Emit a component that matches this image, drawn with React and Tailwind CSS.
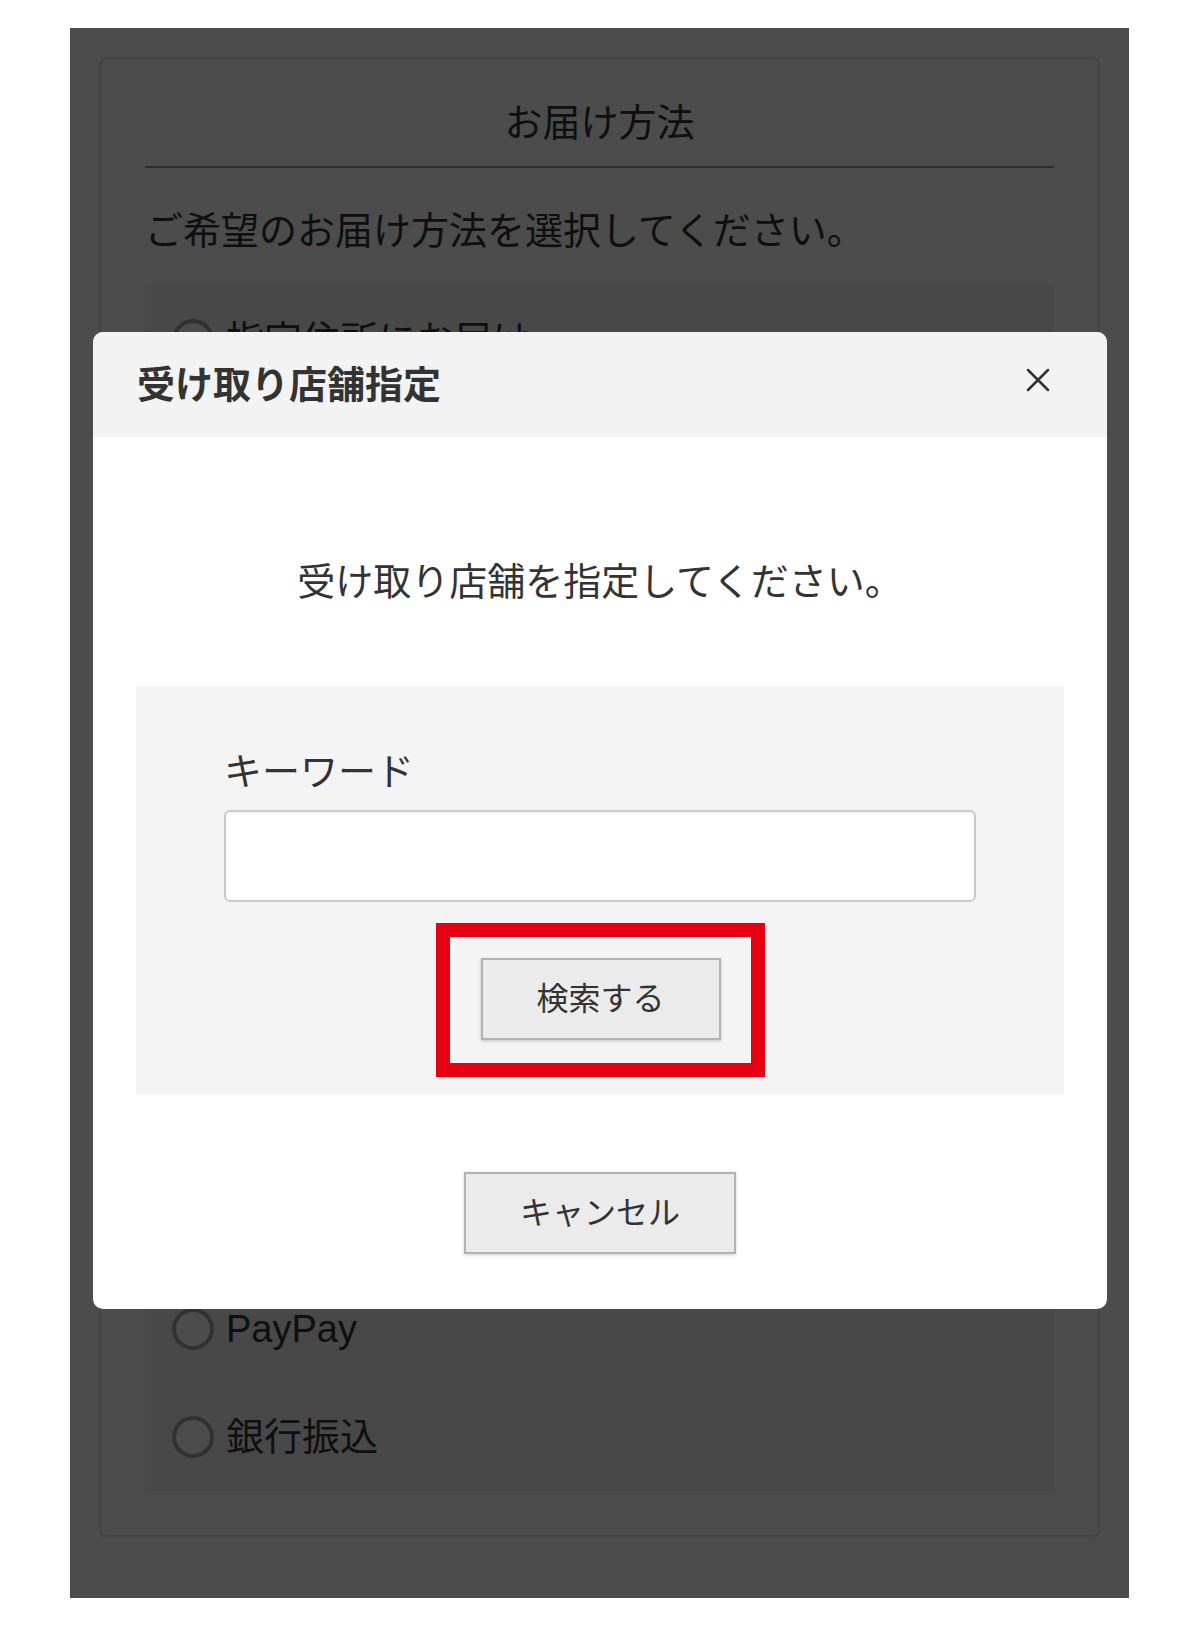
import { X } from 'lucide-react'

const font = { fontFamily: '"Liberation Sans", "Noto Sans CJK JP", sans-serif' }

const RadioRow = ({ label }) => (
  <div className="h-[108px] flex items-center gap-[12px] pl-[27px]">
    <span className="w-[42px] h-[42px] rounded-full border-[4px] border-[#a6a6a6] bg-white shrink-0" />
    <span className="text-[38px] leading-[50px] text-[#333]">{label}</span>
  </div>
)

const App = () => {
  return (
    <div className="bg-white h-[1626px] pt-[28px]" style={font}>
      <div className="relative ml-[70px] w-[1059px] h-[1570px] bg-white overflow-hidden">
        {/* page behind the dialog */}
        <div className="pt-[30px] px-[30px]">
          <div className="w-[999px] rounded-[5px] border border-[#d6d6d6] shadow-sm bg-white px-[44px] pt-[39px] pb-[44px]">
            <h2 className="text-center text-[38px] leading-[50px] text-[#333]">お届け方法</h2>
            <div className="mt-[18px] h-[2px] bg-[#9a9a9a]" />
            <p className="mt-[38px] text-[38px] leading-[50px] text-[#333]">ご希望のお届け方法を選択してください。</p>
            <div className="mt-[30px] bg-[#f2f2f2]">
              <RadioRow label="指定住所にお届け" />
              {/* rows hidden by the dialog */}
              <div className="h-[881px]" />
              <RadioRow label="PayPay" />
              <RadioRow label="銀行振込" />
            </div>
          </div>
        </div>

        {/* overlay */}
        <div className="absolute inset-0 bg-black/70" />

        {/* dialog */}
        <div className="absolute left-[23px] top-[304px] w-[1014px] h-[977px] rounded-[10px] bg-white overflow-hidden">
          <div className="h-[105px] bg-[#f4f3f3] flex items-center justify-between pl-[44px] pr-[49px]">
            <h3 className="text-[38px] leading-[50px] font-bold text-[#333]">受け取り店舗指定</h3>
            <button className="-mt-[10px] text-[#333]">
              <X className="w-[40px] h-[40px]" strokeWidth={1.5} />
            </button>
          </div>

          <div className="flex flex-col items-center pt-[120px]">
            <p className="text-[38px] leading-[50px] text-[#333]">受け取り店舗を指定してください。</p>

            <div className="mt-[79px] w-[928px] h-[408px] bg-[#f4f4f4] px-[88px] pt-[61px] flex flex-col">
              <label className="text-[38px] leading-[50px] text-[#333]">キーワード</label>
              <input
                type="text"
                className="mt-[13px] h-[92px] w-full rounded-[6px] border-2 border-[#cbcbcb] bg-white shadow-[inset_0_1px_2px_rgba(0,0,0,0.08)]"
              />
              <div className="mt-[21px] self-center border-[14px] border-[#e60012] pl-[31px] pr-[30px] pt-[21px] pb-[23px]">
                <button className="w-[240px] h-[82px] bg-[#ebebeb] border-2 border-[#b3b3b3] shadow-[0_1px_3px_rgba(0,0,0,0.2)] text-[32px] text-[#333]">
                  検索する
                </button>
              </div>
            </div>

            <button className="mt-[78px] w-[272px] h-[82px] bg-[#ebebeb] border-2 border-[#b3b3b3] shadow-[0_1px_3px_rgba(0,0,0,0.2)] text-[32px] text-[#333]">
              キャンセル
            </button>
          </div>
        </div>
      </div>
    </div>
  )
}

export default App
